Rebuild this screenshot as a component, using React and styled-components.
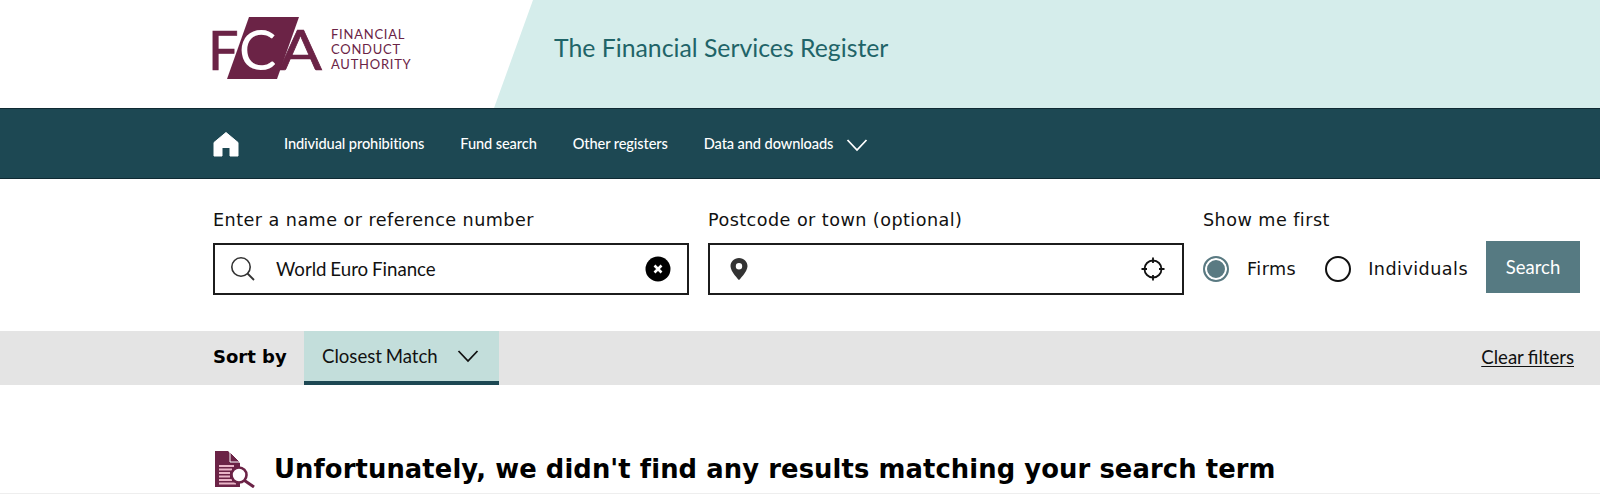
import React from "react";
import styled, { createGlobalStyle } from "styled-components";

const Global = createGlobalStyle`
  html, body { margin: 0; padding: 0; background: #fff; }
  body { font-family: "Lato", "Liberation Sans", sans-serif; color: #000; overflow: hidden; }
`;
const Page = styled.div`width: 1600px; height: 494px; overflow: hidden;`;
const Masthead = styled.header`
  height: 108px; box-sizing: border-box; padding: 0 0 11px 213px; display: flex; align-items: center;
  background: #d5edeb; position: relative;
  &::before {
    content: ""; position: absolute; inset: 0; background: #fff;
    clip-path: polygon(0 0, 533px 0, 494px 100%, 0 100%);
  }
`;
const LogoBox = styled.div`position: relative; display: flex; align-items: center; width: 340px;`;
const LogoMark = styled.svg`flex: none; width: 116px; height: 66px; margin-left: -6px;`;
const LogoWords = styled.div`
  font-size: 13px; line-height: 15px; letter-spacing: 0.75px; color: #6b2346; margin-left: 8px; padding-top: 2px;
`;
const Title = styled.h1`
  position: relative; margin: -2px 0 0 1px; font-weight: 400; font-size: 24.8px; color: #1f6468;
`;
const Nav = styled.nav`
  border-top: 1px solid #0f2a33; border-bottom: 1px solid #0f2a33; box-sizing: border-box;
  height: 71px; background: #1d4853; padding: 0 0 0 213px; display: flex; align-items: center; color: #fff;
`;
const NavLink = styled.span`
  font-size: 14.6px; font-weight: 500; letter-spacing: -0.1px; margin-right: 36px; display: flex; align-items: center; color: #fff;
`;
const HomeIcon = styled.svg`width: 26px; height: 26px; margin-right: 45px; flex: none;`;
const SearchRow = styled.section`
  height: 152px; box-sizing: border-box; padding: 31px 20px 0 213px; display: flex; align-items: flex-start;
`;
const Field = styled.div`width: 476px; margin-right: 19px;`;
const Label = styled.div`
  font-family: "DejaVu Sans", sans-serif; font-size: 17.6px; line-height: 20px; color: #111; margin-bottom: 13px; letter-spacing: 0.45px; white-space: nowrap;
`;
const InputBox = styled.div`
  box-sizing: border-box; height: 52px; border: 2px solid #1c1c1c; display: flex; align-items: center; padding: 0 16px;
  font-size: 18.7px; color: #111;
`;
const InputText = styled.span`margin-left: 20px; flex: 1; word-spacing: -1px;`;
const PrefIcon = styled.svg`flex: none;`;
const ChoiceArea = styled.div`width: 283px; flex: none;`;
const Radios = styled.div`
  display: flex; align-items: center; height: 52px; margin-top: 3px;
  font-family: "DejaVu Sans", sans-serif; font-size: 17.6px; color: #111; letter-spacing: 0.45px;
`;
const Circle = styled.span`
  box-sizing: border-box; width: 26px; height: 26px; border-radius: 50%; flex: none; margin-right: ${p => (p.$on ? 18 : 17)}px;
  border: 2px solid ${p => (p.$on ? "#5a7a82" : "#111")};
  background: ${p => (p.$on ? "#5a7a82" : "#fff")};
  box-shadow: ${p => (p.$on ? "inset 0 0 0 2px #fff" : "none")};
`;
const RadioText = styled.span`margin-right: ${p => p.$gap}px;`;
const Button = styled.div`
  width: 94px; height: 52px; margin-top: 31px; flex: none; background: #567a82; color: #fff;
  font-size: 18.5px; display: flex; align-items: center; justify-content: center; box-sizing: border-box;
`;
const SortBar = styled.section`
  height: 54px; background: #e4e4e4; padding: 0 26px 0 213px; display: flex; align-items: stretch;
`;
const SortLabel = styled.div`
  width: 91px; font-family: "DejaVu Sans", sans-serif; font-weight: 700; font-size: 18px; display: flex; align-items: center; padding-bottom: 3px; box-sizing: border-box;
`;
const SortSelect = styled.div`
  width: 195px; box-sizing: border-box; background: #c3dedb; border-bottom: 4px solid #1d4853; display: flex; align-items: center;
  padding: 0 20px 0 18px; justify-content: space-between; font-size: 18.6px; color: #111; word-spacing: -1px;
`;
const Clear = styled.a`
  margin-left: auto; align-self: center; font-size: 18.6px; color: #111; text-decoration: underline; text-underline-offset: 2px; word-spacing: -0.5px; padding-bottom: 2px;
`;
const Result = styled.section`
  padding: 60px 0 0 214px; display: flex; align-items: center; height: 109px; box-sizing: border-box; border-bottom: 1px solid #eee;
`;
const Heading = styled.h2`
  margin: 0 0 0 18px; font-family: "DejaVu Sans", sans-serif; font-weight: 700; font-size: 25.8px; color: #000; white-space: nowrap; line-height: 40px; letter-spacing: 0.1px;
`;

const Logo = () => (
  <LogoMark viewBox="-6 0 116 66">
    <text x="-5" y="54" fontFamily="Lato, sans-serif" fontSize="54" fill="#6b2346" stroke="#6b2346" strokeWidth="0.7">F</text>
    <polygon points="36,1 86,1 64,63 14,63" fill="#6b2346" stroke="#fff" strokeWidth="2" paintOrder="stroke" />
    <text x="26" y="54" fontFamily="Lato, sans-serif" fontSize="56" fill="#fff">C</text>
    <text x="66" y="54" fontFamily="Lato, sans-serif" fontSize="56" fill="#6b2346" stroke="#6b2346" strokeWidth="0.7" textLength="43" lengthAdjust="spacingAndGlyphs">A</text>
  </LogoMark>
);

export default function App() {
  return (
    <Page>
      <Global />
      <Masthead>
        <LogoBox>
          <Logo />
          <LogoWords>FINANCIAL<br />CONDUCT<br />AUTHORITY</LogoWords>
        </LogoBox>
        <Title>The Financial Services Register</Title>
      </Masthead>
      <Nav>
        <HomeIcon viewBox="0 0 26 26">
          <path d="M13 1.5 L25 11.5 V25 H17 V16.5 H9 V25 H1 V11.5 Z" fill="#fff" stroke="#fff" strokeLinejoin="round" />
        </HomeIcon>
        <NavLink>Individual prohibitions</NavLink>
        <NavLink>Fund search</NavLink>
        <NavLink>Other registers</NavLink>
        <NavLink>
          Data and downloads
          <svg width="22" height="14" viewBox="0 0 22 14" style={{ marginLeft: 13, marginTop: 3 }}>
            <path d="M1.5 2 L11 12 L20.5 2" fill="none" stroke="#fff" strokeWidth="1.8" />
          </svg>
        </NavLink>
      </Nav>
      <SearchRow>
        <Field>
          <Label>Enter a name or reference number</Label>
          <InputBox>
            <PrefIcon width="26" height="26" viewBox="0 0 26 26" style={{ marginLeft: -1 }}>
              <circle cx="11" cy="11" r="9.2" fill="none" stroke="#333" strokeWidth="1.6" />
              <path d="M17.5 17.5 L24 24" stroke="#333" strokeWidth="1.8" />
            </PrefIcon>
            <InputText>World Euro Finance</InputText>
            <PrefIcon width="26" height="26" viewBox="0 0 26 26">
              <circle cx="13" cy="13" r="12.5" fill="#000" />
              <path d="M9.5 9.5 L16.5 16.5 M16.5 9.5 L9.5 16.5" stroke="#fff" strokeWidth="2.6" />
            </PrefIcon>
          </InputBox>
        </Field>
        <Field>
          <Label>Postcode or town (optional)</Label>
          <InputBox>
            <PrefIcon width="20" height="24" viewBox="0 0 20 24" style={{ marginLeft: 3 }}>
              <path fillRule="evenodd" d="M10 1 C5 1 1.5 4.8 1.5 9.2 C1.5 14.5 10 23 10 23 C10 23 18.5 14.5 18.5 9.2 C18.5 4.8 15 1 10 1 Z M10 6 A3.2 3.2 0 1 1 10 12.4 A3.2 3.2 0 1 1 10 6 Z" fill="#333" />
            </PrefIcon>
            <InputText />
            <PrefIcon width="24" height="24" viewBox="0 0 24 24" style={{ marginRight: 1 }}>
              <circle cx="12" cy="12" r="8.5" fill="none" stroke="#111" strokeWidth="1.8" />
              <path d="M12 0.5 V6 M12 18 V23.5 M0.5 12 H6 M18 12 H23.5" stroke="#111" strokeWidth="1.8" />
            </PrefIcon>
          </InputBox>
        </Field>
        <ChoiceArea>
          <Label>Show me first</Label>
          <Radios>
            <Circle $on />
            <RadioText $gap={29}>Firms</RadioText>
            <Circle />
            <RadioText $gap={0}>Individuals</RadioText>
          </Radios>
        </ChoiceArea>
        <Button>Search</Button>
      </SearchRow>
      <SortBar>
        <SortLabel>Sort by</SortLabel>
        <SortSelect>
          Closest Match
          <svg width="22" height="14" viewBox="0 0 22 14">
            <path d="M1.5 2 L11 12 L20.5 2" fill="none" stroke="#111" strokeWidth="1.8" />
          </svg>
        </SortSelect>
        <Clear>Clear filters</Clear>
      </SortBar>
      <Result>
        <svg width="42" height="38" viewBox="0 0 42 38" style={{ flex: "none" }}>
          <path d="M1 1 H14 L26 13 V37 H1 Z" fill="#6b2346" />
          <path d="M16 2 L26 12 H16 Z" fill="#6b2346" stroke="#fff" strokeWidth="1" />
          <path d="M5 16 H20 M5 19.5 H18 M5 23 H16 M5 26.5 H16 M5 30 H18 M5 33.5 H22" stroke="#eab6c8" strokeWidth="1.8" />
          <circle cx="25" cy="25" r="7.5" fill="#fff" stroke="#6b2346" strokeWidth="2.6" />
          <path d="M30.5 30.5 L40 37" stroke="#6b2346" strokeWidth="3" />
        </svg>
        <Heading>Unfortunately, we didn't find any results matching your search term</Heading>
      </Result>
    </Page>
  );
}
